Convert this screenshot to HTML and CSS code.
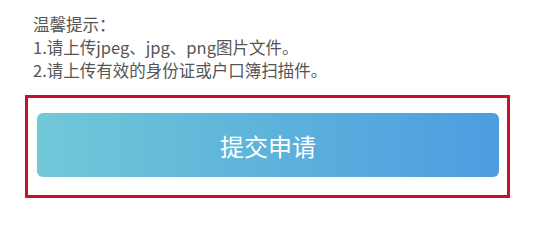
FILE: index.html
```html
<!DOCTYPE html>
<html lang="zh-CN">
<head>
<meta charset="utf-8">
<title>提交申请</title>
<link rel="stylesheet" href="styles.css">
</head>
<body>
<div class="page">
  <div class="tips">
    <p class="tips-line">温馨提示：</p>
    <p class="tips-line">1.请上传jpeg、jpg、png图片文件。</p>
    <p class="tips-line">2.请上传有效的身份证或户口簿扫描件。</p>
  </div>
  <div class="submit-wrap">
    <button class="submit-btn" type="button">提交申请</button>
  </div>
</div>
</body>
</html>
```

FILE: styles.css
```css
html, body {
  margin: 0;
  padding: 0;
  background: #ffffff;
}

.page {
  width: 550px;
  height: 207px;
  font-family: "Noto Sans CJK SC", "Noto Sans", sans-serif;
}

.tips {
  padding: 13px 0 0 33px;
  color: #555555;
  font-size: 16.5px;
  line-height: 23px;
}

.tips-line {
  margin: 0;
  white-space: nowrap;
}

.submit-wrap {
  box-sizing: border-box;
  width: 485px;
  margin: 13px 0 0 25px;
  padding: 15px 8px 18px 9px;
  border: 3px solid #c8102e;
}

.submit-btn {
  display: flex;
  align-items: center;
  justify-content: center;
  width: 100%;
  height: 64px;
  border: none;
  border-radius: 6px;
  background: linear-gradient(90deg, #71c8d8 0%, #5fb5da 45%, #4c9de2 100%);
  color: #ffffff;
  font-family: "Noto Sans CJK SC", "Noto Sans", sans-serif;
  font-size: 24px;
  padding: 0;
  cursor: pointer;
}
```
